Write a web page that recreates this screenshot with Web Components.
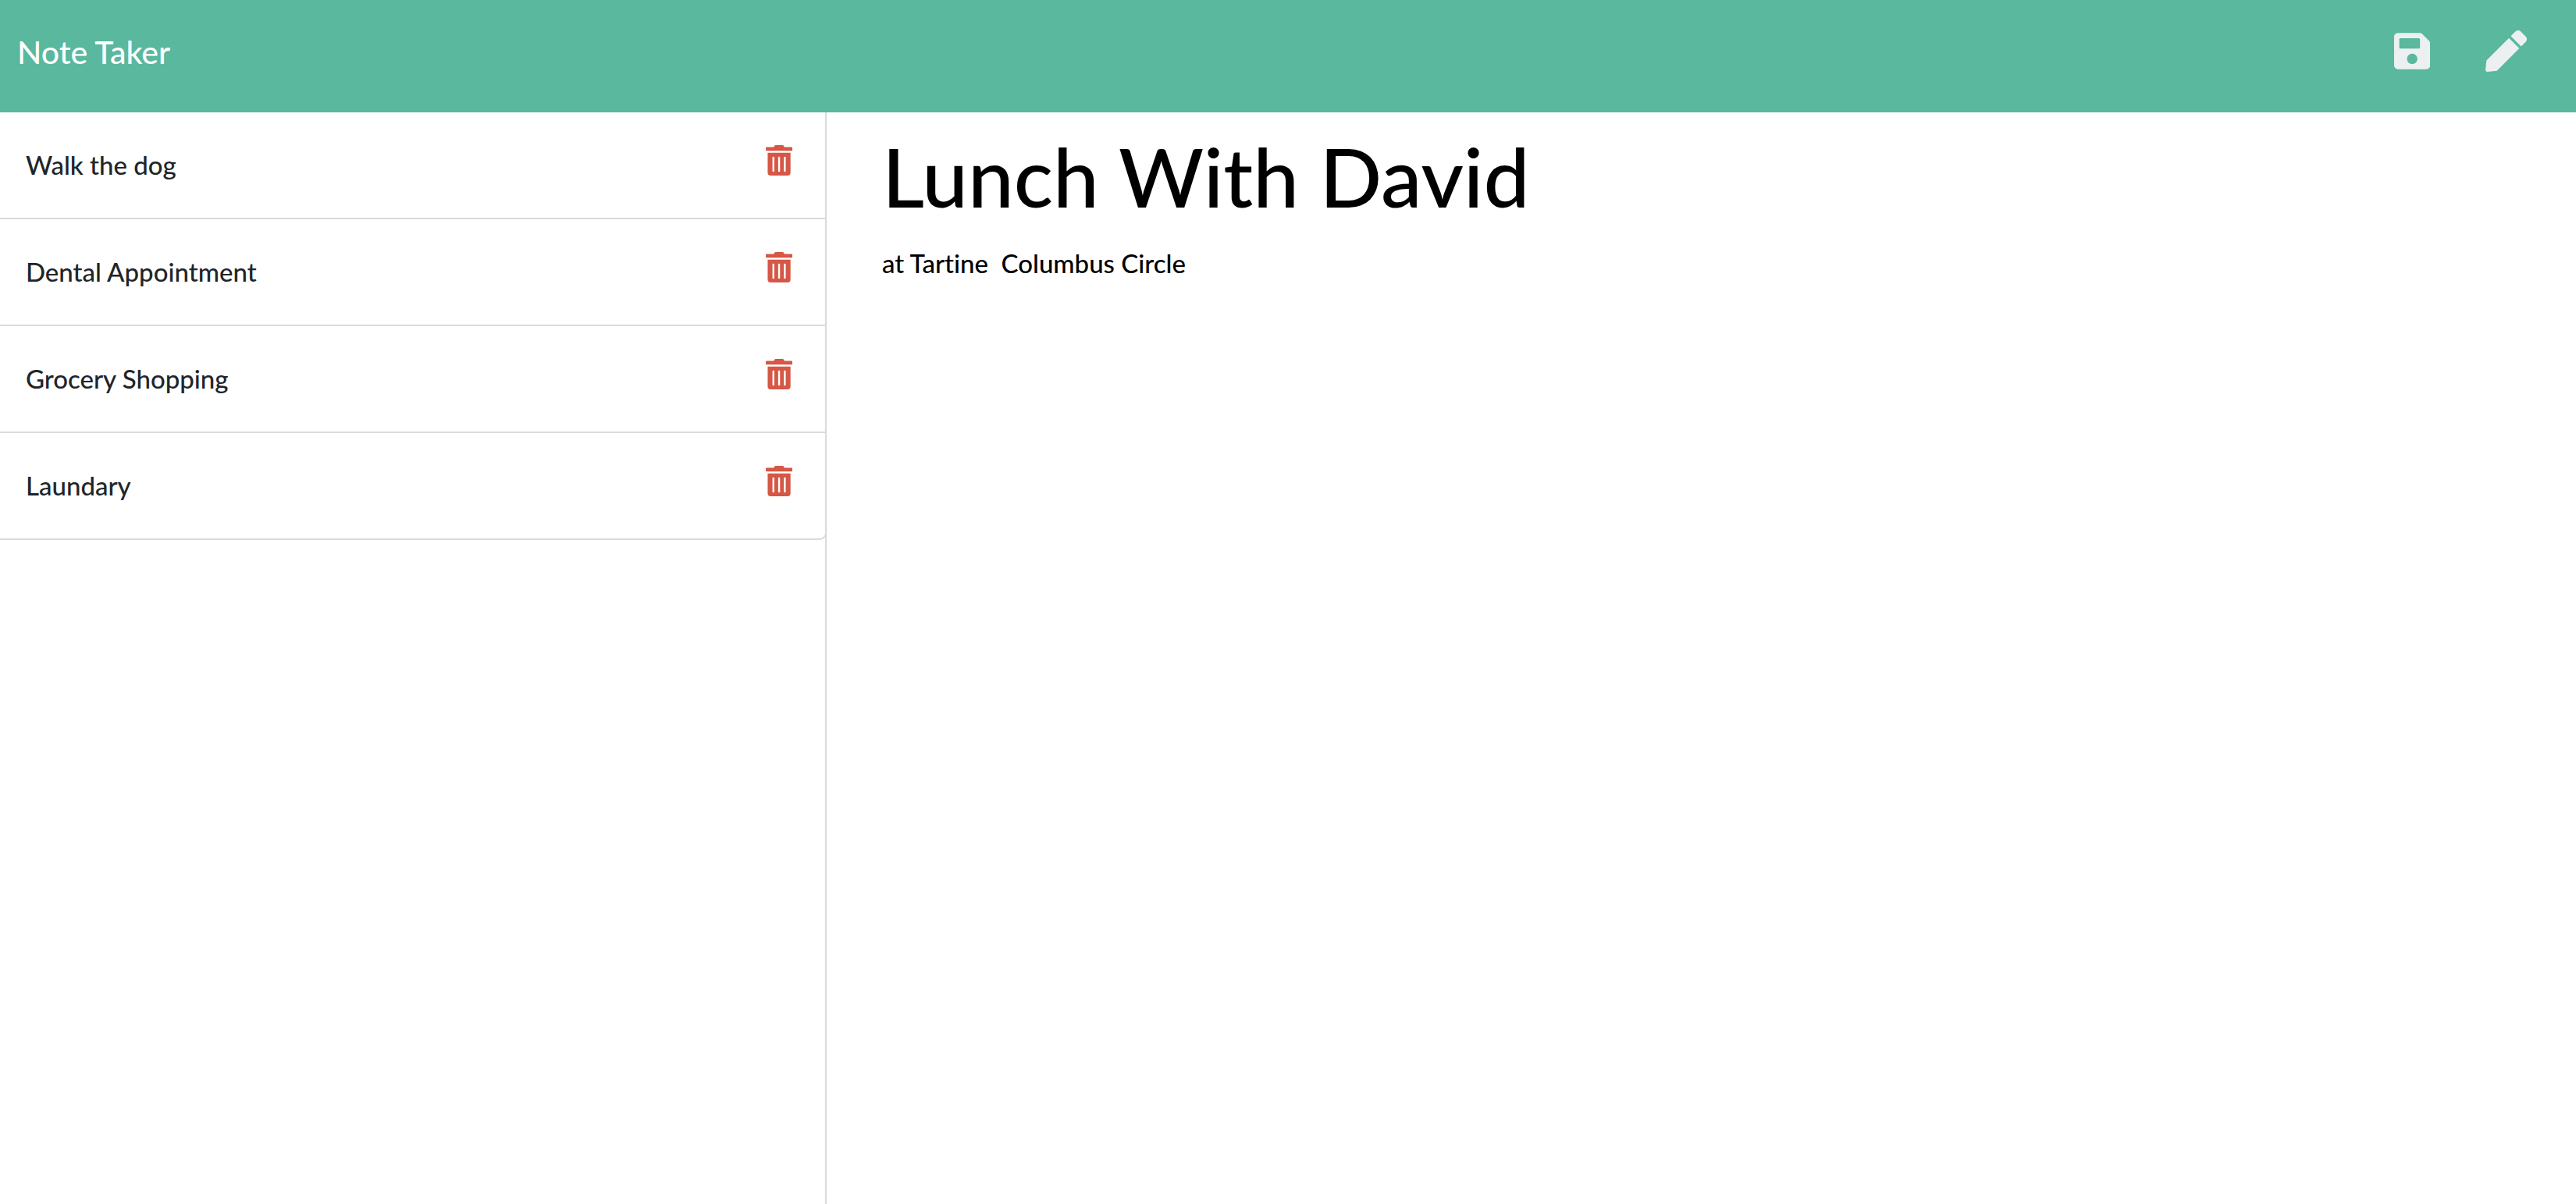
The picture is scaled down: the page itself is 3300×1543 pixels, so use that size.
<!DOCTYPE html>
<html lang="en">
<head>
<meta charset="utf-8">
<title>Note Taker</title>
<style>
  html, body { height: 100%; margin: 0; }
  body { background: #fff; color: #212529; font-family: Lato, "Liberation Sans", sans-serif; font-size: 33px; font-weight: 500; line-height: 50px; font-variant-ligatures: no-common-ligatures; }
</style>
</head>
<body>
<note-app></note-app>
<script>
const define = (name, html, setup) => {
  const template = document.createElement('template');
  template.innerHTML = html;
  customElements.define(name, class extends HTMLElement {
    constructor() {
      super();
      this.attachShadow({ mode: 'open' }).append(template.content.cloneNode(true));
    }
    connectedCallback() { if (setup) setup(this, this.shadowRoot); }
  });
};

const icons = {
  save: ['0 0 448 512', 'M433.941 129.941l-83.882-83.882A48 48 0 0 0 316.118 32H48C21.49 32 0 53.49 0 80v352c0 26.51 21.49 48 48 48h352c26.51 0 48-21.49 48-48V163.882a48 48 0 0 0-14.059-33.941zM224 416c-35.346 0-64-28.654-64-64 0-35.346 28.654-64 64-64s64 28.654 64 64c0 35.346-28.654 64-64 64zm96-304.52V212c0 6.627-5.373 12-12 12H76c-6.627 0-12-5.373-12-12V108c0-6.627 5.373-12 12-12h228.52c3.183 0 6.235 1.264 8.485 3.515l3.48 3.48A11.996 11.996 0 0 1 320 111.48z'],
  pen: ['0 0 512 512', 'M290.74 93.24l128.02 128.02-277.99 277.99-114.14 12.6C11.35 513.54-1.56 500.62.14 485.34l12.7-114.22 277.9-277.88zm207.2-19.06l-60.11-60.11c-18.75-18.75-49.16-18.75-67.91 0l-56.55 56.55 128.02 128.02 56.55-56.55c18.75-18.76 18.75-49.16 0-67.91z'],
  trash: ['0 0 448 512', 'M32 464a48 48 0 0 0 48 48h288a48 48 0 0 0 48-48V128H32zm272-256a16 16 0 0 1 32 0v224a16 16 0 0 1-32 0zm-96 0a16 16 0 0 1 32 0v224a16 16 0 0 1-32 0zm-96 0a16 16 0 0 1 32 0v224a16 16 0 0 1-32 0zM432 32H312l-9.4-18.7A24 24 0 0 0 281.1 0H166.8a23.72 23.72 0 0 0-21.4 13.3L136 32H16A16 16 0 0 0 0 48v32a16 16 0 0 0 16 16h416a16 16 0 0 0 16-16V48a16 16 0 0 0-16-16z']
};

define('icon-button', `
  <style>
    :host { display: block; }
    button { display: block; margin: 0; padding: 0; border: 0; background: none; color: inherit; cursor: pointer; }
    svg { display: block; height: var(--icon-size, 53px); width: auto; fill: currentColor; }
  </style>
  <button type="button"><svg aria-hidden="true"><path/></svg></button>`,
  (host, root) => {
    const [box, d] = icons[host.getAttribute('icon')];
    root.querySelector('svg').setAttribute('viewBox', box);
    root.querySelector('path').setAttribute('d', d);
    root.querySelector('button').setAttribute('aria-label', host.getAttribute('label'));
  });

define('note-header', `
  <style>
    :host { display: block; }
    header { display: flex; justify-content: space-between; align-items: flex-start; box-sizing: border-box; height: 144px; padding: 39px 63px 0 22px; background: #59b89d; color: #ecf0f1; }
    a { color: #fff; font-size: 41px; line-height: 56px; text-decoration: none; }
    nav { display: flex; gap: 71px; }
  </style>
  <header>
    <a href="#"><slot></slot></a>
    <nav aria-label="Note actions">
      <icon-button icon="save" label="Save note"></icon-button>
      <icon-button icon="pen" label="New note"></icon-button>
    </nav>
  </header>`);

define('note-item', `
  <style>
    :host { display: flex; justify-content: space-between; align-items: flex-start; box-sizing: border-box; height: 137px; margin-right: -2px; padding: 42px 42px 0 33px; border: solid #dadada; border-width: 0 2px 2px 0; }
    :host(:last-of-type) { border-bottom-right-radius: 9px; }
    icon-button { --icon-size: 39px; color: #d65745; }
  </style>
  <span><slot></slot></span>
  <icon-button icon="trash" label="Delete note"></icon-button>`);

define('note-list', `
  <style>
    :host { display: block; box-sizing: border-box; border-right: 2px solid #dadada; }
  </style>
  <div role="list"><slot></slot></div>`);

define('note-editor', `
  <style>
    :host { display: flex; flex-direction: column; padding: 17px 71px; }
    input, textarea { display: block; box-sizing: border-box; width: 100%; margin: 0; padding: 0; border: 0; outline: 0; background: none; color: #000; font-family: inherit; font-weight: inherit; font-variant-ligatures: inherit; }
    input { height: 128px; font-size: 105px; line-height: 128px; }
    textarea { flex: 1; margin-top: 23px; font-size: 33px; line-height: 50px; resize: none; overflow: hidden; }
  </style>
  <input type="text" aria-label="Note title" value="Lunch With David">
  <textarea aria-label="Note text">at Tartine  Columbus Circle</textarea>`);

define('note-app', `
  <style>
    :host { display: flex; flex-direction: column; min-height: 100%; }
    main { flex: 1; display: grid; grid-template-columns: minmax(0, 1059fr) minmax(0, 2241fr); }
  </style>
  <note-header>Note Taker</note-header>
  <main>
    <note-list>
      <note-item role="listitem">Walk the dog</note-item>
      <note-item role="listitem">Dental Appointment</note-item>
      <note-item role="listitem">Grocery Shopping</note-item>
      <note-item role="listitem">Laundary</note-item>
    </note-list>
    <note-editor></note-editor>
  </main>`);
</script>
</body>
</html>
